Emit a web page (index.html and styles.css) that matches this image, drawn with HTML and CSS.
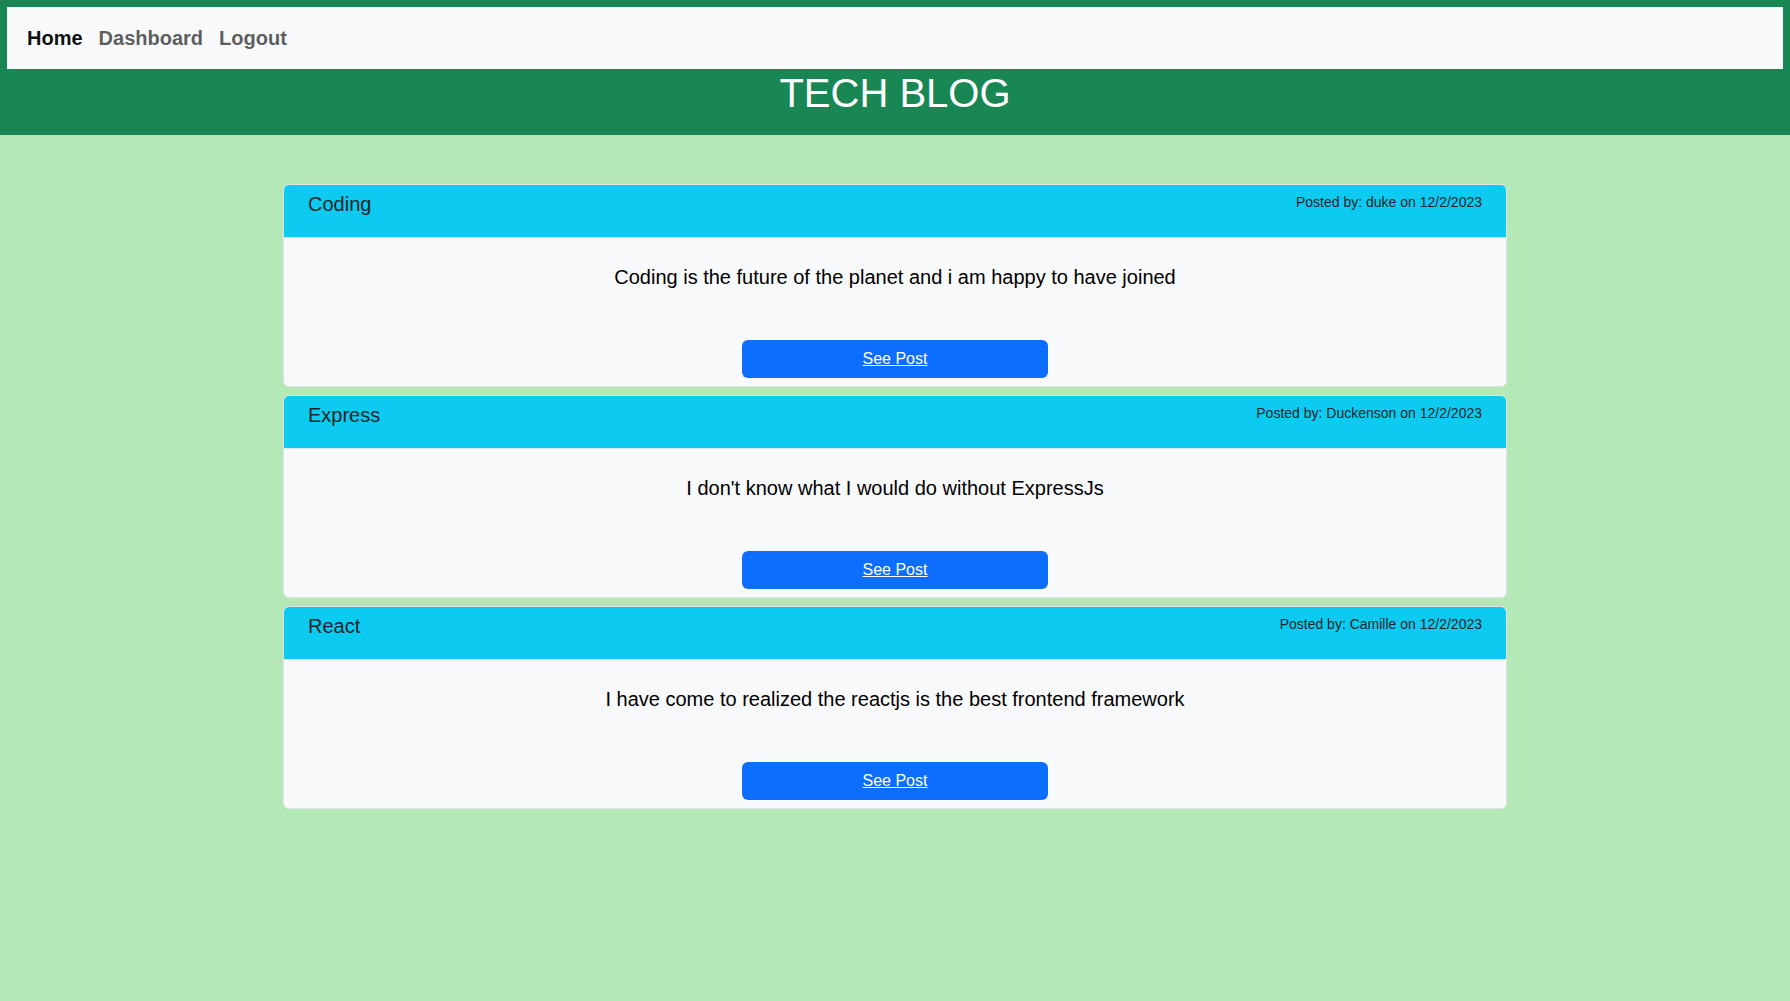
FILE: index.html
```html
<!DOCTYPE html>
<html lang="en">
<head>
<meta charset="utf-8">
<title>Tech Blog</title>
<link rel="stylesheet" href="styles.css">
</head>
<body>
<header class="site-header">
  <nav class="navbar">
    <a class="nav-link active" href="#">Home</a>
    <a class="nav-link" href="#">Dashboard</a>
    <a class="nav-link" href="#">Logout</a>
  </nav>
  <h1 class="site-title">TECH BLOG</h1>
</header>
<main class="posts">
  <article class="card">
    <div class="card-header">
      <h5 class="card-title">Coding</h5>
      <p class="card-meta">Posted by: duke on 12/2/2023</p>
    </div>
    <div class="card-body">
      <p class="card-text">Coding is the future of the planet and i am happy to have joined</p>
      <a class="btn" href="#">See Post</a>
    </div>
  </article>
  <article class="card">
    <div class="card-header">
      <h5 class="card-title">Express</h5>
      <p class="card-meta">Posted by: Duckenson on 12/2/2023</p>
    </div>
    <div class="card-body">
      <p class="card-text">I don't know what I would do without ExpressJs</p>
      <a class="btn" href="#">See Post</a>
    </div>
  </article>
  <article class="card">
    <div class="card-header">
      <h5 class="card-title">React</h5>
      <p class="card-meta">Posted by: Camille on 12/2/2023</p>
    </div>
    <div class="card-body">
      <p class="card-text">I have come to realized the reactjs is the best frontend framework</p>
      <a class="btn" href="#">See Post</a>
    </div>
  </article>
</main>
</body>
</html>
```
FILE: styles.css
```css
* { box-sizing: border-box; }
html, body {
  margin: 0;
  padding: 0;
}
body {
  background: #b4e9b7;
  font-family: "Liberation Sans", Arial, Helvetica, sans-serif;
  color: #212529;
  min-height: 1001px;
}
.site-header {
  background: #198754;
  padding: 7px 7px 18px;
}
.navbar {
  background: #f8f9fa;
  height: 62px;
  display: flex;
  align-items: center;
  padding-left: 12px;
}
.nav-link {
  font-size: 20px;
  font-weight: bold;
  line-height: 30px;
  padding: 0 8px;
  color: rgba(0, 0, 0, 0.65);
  text-decoration: none;
}
.nav-link.active {
  color: rgba(0, 0, 0, 0.95);
}
.site-title {
  margin: 0;
  text-align: center;
  color: #fff;
  font-weight: normal;
  font-size: 40px;
  line-height: 48px;
}
.posts {
  width: 1224px;
  margin: 49px auto 0;
  display: flex;
  flex-direction: column;
  gap: 8px;
}
.card {
  background: #f8f9fa;
  border: 1px solid #dfe4e6;
  border-radius: 6px;
  overflow: hidden;
  height: 203px;
  display: flex;
  flex-direction: column;
}
.card-header {
  background: #0dcaf0;
  height: 53px;
  padding: 7px 24px 0;
  display: flex;
  justify-content: space-between;
  align-items: flex-start;
  border-bottom: 1px solid #dfe4e6;
}
.card-title {
  margin: 0;
  font-size: 20px;
  font-weight: normal;
  line-height: 24px;
  color: #212529;
}
.card-meta {
  margin: 0;
  font-size: 14px;
  line-height: 21px;
  color: #212529;
}
.card-body {
  flex: 1;
  display: flex;
  flex-direction: column;
  align-items: center;
  padding: 24px 0 8px;
}
.card-text {
  margin: 0;
  font-size: 20px;
  line-height: 30px;
  color: #000;
  text-align: center;
}
.btn {
  margin-top: auto;
  width: 306px;
  height: 38px;
  background: #0d6efd;
  color: #fff;
  border-radius: 6px;
  font-size: 16px;
  line-height: 38px;
  text-align: center;
  text-decoration: underline;
}
```
